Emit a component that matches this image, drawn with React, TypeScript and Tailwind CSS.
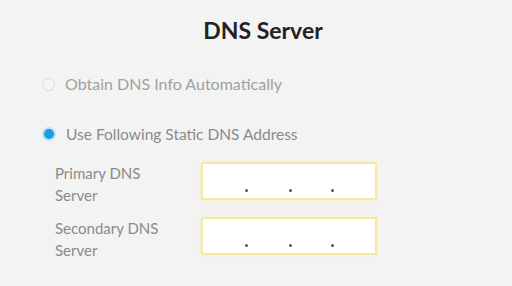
import React from "react";

function Dot() {
  return <span className="w-[3px] h-[3px] rounded-full bg-[#555]" />;
}

function IpBox() {
  return (
    <div className="w-[176px] h-[38px] bg-white border-2 border-[#f5e8a0] shadow-[0_0_3px_#f7eeb8] flex items-end pb-[6px] pl-[42px]">
      <Dot />
      <span className="w-[41px]" />
      <Dot />
      <span className="w-[39px]" />
      <Dot />
    </div>
  );
}

export default function App() {
  return (
    <div className="w-[512px] h-[286px] bg-[#f3f3f3] font-['Lato',sans-serif] flex flex-col">
      <div className="h-[62px] flex justify-center items-center pl-[14px] pb-[2px]">
        <h1 className="text-[23px] font-bold text-[#222]">DNS Server</h1>
      </div>
      <div className="h-[44px] flex items-center pl-[42px] gap-[10px]">
        <span className="w-[13px] h-[13px] rounded-full border border-[#d8d8d8] bg-[#f5f5f5]" />
        <span className="text-[16px] text-[#a0a0a0]">Obtain DNS Info Automatically</span>
      </div>
      <div className="h-[56px] flex items-start pt-[18px] pl-[42px] gap-[10px]">
        <span className="w-[14px] h-[14px] mt-[3px] rounded-full bg-[#bfe3f5] flex items-center justify-center">
          <span className="w-[10px] h-[10px] rounded-full bg-[#1f9be0]" />
        </span>
        <span className="text-[15.5px] leading-[20px] text-[#8a8a8a]">Use Following Static DNS Address</span>
      </div>
      <div className="flex flex-col gap-[11px] pl-[55px]">
        <div className="flex items-start">
          <div className="w-[146px] text-[15px] leading-[22px] text-[#8a8a8a]">
            Primary DNS<br />Server
          </div>
          <IpBox />
        </div>
        <div className="flex items-start">
          <div className="w-[146px] text-[15px] leading-[22px] text-[#8a8a8a]">
            Secondary DNS<br />Server
          </div>
          <IpBox />
        </div>
      </div>
    </div>
  );
}
